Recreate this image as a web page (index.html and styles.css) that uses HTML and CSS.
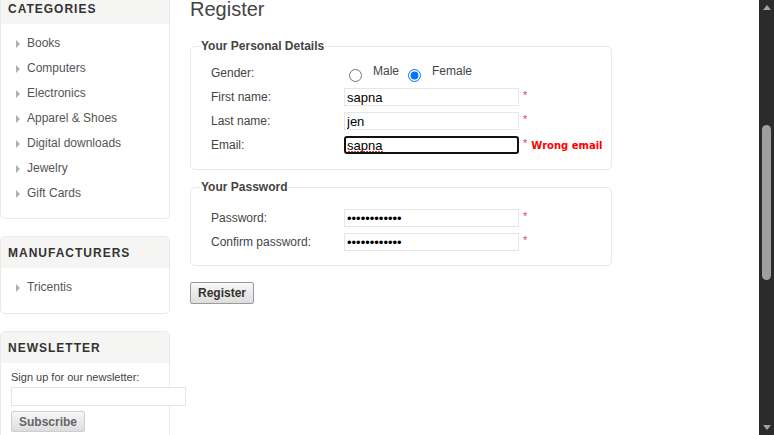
FILE: index.html
```html
<!DOCTYPE html>
<html>
<head>
<meta charset="utf-8">
<link rel="stylesheet" href="styles.css">
</head>
<body>
<div class="viewport">
  <div class="page">
    <aside class="sidebar">
      <div class="block">
        <div class="block-title">Categories</div>
        <ul class="listbox">
          <li><span class="arrow"></span>Books</li>
          <li><span class="arrow"></span>Computers</li>
          <li><span class="arrow"></span>Electronics</li>
          <li><span class="arrow"></span>Apparel &amp; Shoes</li>
          <li><span class="arrow"></span>Digital downloads</li>
          <li><span class="arrow"></span>Jewelry</li>
          <li><span class="arrow"></span>Gift Cards</li>
        </ul>
      </div>
      <div class="block block-manu">
        <div class="block-title">Manufacturers</div>
        <ul class="listbox listbox-manu">
          <li><span class="arrow"></span>Tricentis</li>
        </ul>
      </div>
      <div class="block block-news">
        <div class="block-title">Newsletter</div>
        <div class="news-body">
          <div class="news-text">Sign up for our newsletter:</div>
          <input class="news-input" type="text">
          <button class="btn btn-sub">Subscribe</button>
        </div>
      </div>
    </aside>
    <main class="main">
      <h1 class="page-title">Register</h1>
      <fieldset class="fs fs-personal">
        <legend>Your Personal Details</legend>
        <div class="rows">
          <div class="row">
            <label class="lbl">Gender:</label>
            <div class="gender">
              <input type="radio" name="g" class="radio radio-male">
              <span class="gtxt">Male</span>
              <input type="radio" name="g" class="radio radio-female" checked>
              <span class="gtxt">Female</span>
            </div>
          </div>
          <div class="row">
            <label class="lbl">First name:</label>
            <input class="txt" type="text" value="sapna">
            <span class="req">*</span>
          </div>
          <div class="row">
            <label class="lbl">Last name:</label>
            <input class="txt" type="text" value="jen">
            <span class="req">*</span>
          </div>
          <div class="row">
            <label class="lbl">Email:</label>
            <input class="txt txt-focus" type="text" value="sapna">
            <span class="req">*</span>
            <span class="err">Wrong email</span>
          </div>
        </div>
      </fieldset>
      <fieldset class="fs fs-password">
        <legend>Your Password</legend>
        <div class="rows">
          <div class="row">
            <label class="lbl">Password:</label>
            <input class="txt" type="password" value="sapna@123456">
            <span class="req">*</span>
          </div>
          <div class="row">
            <label class="lbl">Confirm password:</label>
            <input class="txt" type="password" value="sapna@123456">
            <span class="req">*</span>
          </div>
        </div>
      </fieldset>
      <button class="btn btn-reg">Register</button>
    </main>
  </div>
  <div class="scrollbar">
    <div class="sb-up"></div>
    <div class="sb-track"><div class="sb-thumb"></div></div>
    <div class="sb-down"></div>
  </div>
</div>
</body>
</html>
```

FILE: styles.css
```css
* { box-sizing: border-box; }
html, body { margin: 0; padding: 0; background: #fff; }
body {
  font-family: "Liberation Sans", Arial, sans-serif;
  font-size: 12px;
  color: #444;
}
.viewport {
  display: flex;
  width: 774px;
  height: 435px;
  overflow: hidden;
}
.page {
  flex: 1;
  display: flex;
  gap: 20px;
  margin-top: -8px;
  align-items: flex-start;
}
.sidebar { width: 170px; flex: none; }
.block {
  border: 1px solid #e9e9e9;
  border-radius: 5px;
  background: #fff;
}
.block-manu { margin-top: 17px; }
.block-news { margin-top: 17px; }
.block-title {
  height: 31px;
  line-height: 33px;
  background: #f5f5f3;
  border-radius: 4px 4px 0 0;
  padding-left: 7px;
  font-weight: bold;
  font-size: 12px;
  letter-spacing: 1px;
  text-transform: uppercase;
  color: #333;
}
.listbox {
  list-style: none;
  margin: 0;
  padding: 7px 0 12px 0;
}
.listbox-manu { padding-bottom: 13px; }
.listbox li {
  height: 25px;
  line-height: 25px;
  padding-left: 15px;
  display: flex;
  align-items: center;
  color: #555;
}
.arrow {
  width: 0; height: 0;
  border-top: 4px solid transparent;
  border-bottom: 4px solid transparent;
  border-left: 4px solid #b0b0b0;
  margin-right: 7px;
}
.news-body { padding: 8px 10px 0 10px; height: 80px; }
.news-text { font-size: 11px; line-height: 13px; color: #444; }
.news-input {
  display: block;
  width: 175px;
  height: 19px;
  margin-top: 3px;
  border: 1px solid #e6e6e6;
  background: #fff;
}
.btn {
  font-family: "Liberation Sans", Arial, sans-serif;
  font-size: 12px;
  font-weight: bold;
  border: 1px solid #b5b5b5;
  border-radius: 2px;
  background: linear-gradient(#f8f8f8, #dddddd);
  cursor: pointer;
  padding: 0;
}
.btn-sub {
  display: block;
  margin-top: 5px;
  width: 74px;
  height: 21px;
  color: #666;
  border-color: #cfcfcf;
}
.main { width: 422px; flex: none; }
.page-title {
  margin: 5px 0 0 0;
  font-size: 20px;
  line-height: 24px;
  font-weight: normal;
  color: #444;
}
.fs {
  margin: 17px 0 0 0;
  border: 1px solid #e9e9e9;
  border-radius: 5px;
  padding: 10px 9px 15px 9px;
  min-width: 0;
}
.fs-password { margin-top: 9px; padding-top: 14px; padding-bottom: 14px; }
.fs legend {
  padding: 0 1px;
  font-weight: bold;
  line-height: 16px;
  color: #444;
}
.rows {
  display: flex;
  flex-direction: column;
  gap: 6px;
  margin-left: 11px;
}
.row {
  display: flex;
  align-items: center;
  height: 18px;
  white-space: nowrap;
}
.lbl { width: 133px; flex: none; }
.gender { display: flex; align-items: center; height: 18px; }
.radio {
  width: 13px; height: 13px;
  margin: 4px 0 0 5px;
}
.radio-female { margin-left: 9px; }
.gtxt { margin-left: 11px; position: relative; top: -2px; }
.txt {
  width: 175px;
  flex: none;
  height: 18px;
  border: 1px solid #e6e6e6;
  padding: 0 2px;
  font-family: "Liberation Sans", Arial, sans-serif;
  font-size: 13px;
  color: #000;
  background: #fff;
  outline: none;
}
.txt-focus {
  border: 2px solid #111;
  border-radius: 3px;
  padding: 0 1px;
  background-color: #fff;
  background-image: repeating-linear-gradient(90deg, #e03030 0 2px, transparent 2px 3px);
  background-size: 35px 2px;
  background-position: 2px 13px;
  background-repeat: no-repeat;
}
.req {
  color: #e4434b;
  font-size: 11px;
  margin-left: 4px;
  position: relative;
  top: -2px;
}
.err {
  font-family: "DejaVu Sans", Verdana, sans-serif;
  font-size: 10px;
  font-weight: bold;
  color: #f00;
  margin-left: 4px;
  white-space: nowrap;
}
.btn-reg {
  display: block;
  margin-top: 16px;
  width: 64px;
  height: 22px;
  color: #333;
  border-color: #999;
}
.scrollbar {
  width: 15px;
  flex: none;
  background: #2b2b2b;
  display: flex;
  flex-direction: column;
  align-items: center;
}
.sb-up, .sb-down {
  width: 0; height: 0;
  border-left: 4px solid transparent;
  border-right: 4px solid transparent;
  margin: 5px 0;
}
.sb-up { border-bottom: 5px solid #a3a3a3; }
.sb-down { border-top: 5px solid #a3a3a3; }
.sb-track { flex: 1; width: 100%; padding-top: 110px; display: flex; justify-content: center; }
.sb-thumb {
  width: 9px;
  height: 155px;
  background: #9f9f9f;
  border-radius: 5px;
}
```
